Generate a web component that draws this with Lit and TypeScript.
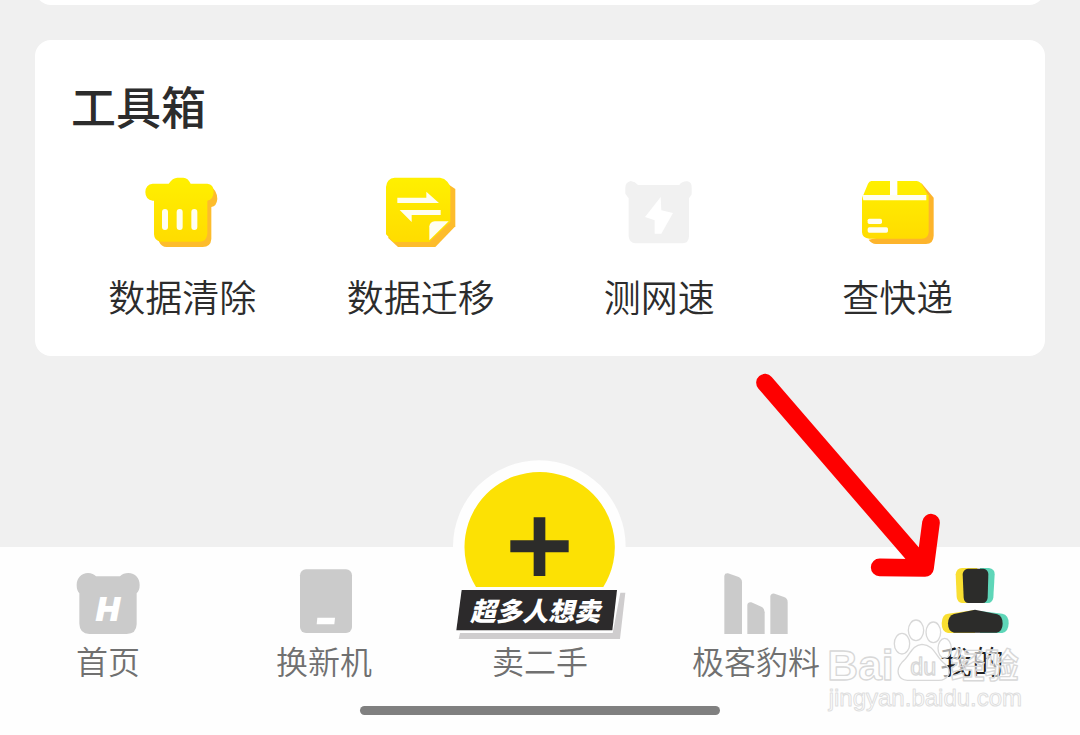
import { LitElement, html, svg, css, type SVGTemplateResult } from "lit";
import { customElement } from "lit/decorators.js";
import { classMap } from "lit/directives/class-map.js";

interface Entry {
  label: string;
  viewBox: string;
  art: SVGTemplateResult;
  raised?: boolean;
  active?: boolean;
}

const tools: Entry[] = [
  {
    label: "数据清除",
    viewBox: "42 9 288 252",
    art: svg`
      <path fill="#fdbc2c" d="M118 62H270Q292 76 292 102Q290 124 274 126V222Q272 246 248 246H140Q124 246 116 228Z"/>
      <path fill="url(#sun)" d="M98 56H146Q158 38 172 38H190Q204 38 212 56H262Q281 57 281 80Q280 104 262 107V206Q260 230 238 230H122Q103 228 102 208V107H98Q76 104 76 81Q77 58 98 56Z"/>
      <g fill="#fffef0"><rect x="126" y="132" width="18" height="63" rx="9"/><rect x="170" y="132" width="18" height="63" rx="9"/><rect x="214" y="132" width="18" height="63" rx="9"/></g>`,
  },
  {
    label: "数据迁移",
    viewBox: "39 9 288 252",
    art: svg`
      <path fill="#fdbc2c" d="M250 48L286 72V184L226 246H114L84 218Z"/>
      <path fill="url(#sun)" d="M104 38H240Q254 40 262 50Q270 58 271 70V170L208 231H100L78 208V66Q80 40 104 38Z"/>
      <path fill="#fffef0" d="M112 98H199V80L237 114H112ZM242 150V135H119L155 171V150Z"/>
      <path fill="#fffef0" d="M266 169L208 226V184Q210 170 224 169Z"/>`,
  },
  {
    label: "测网速",
    viewBox: "33 9 288 252",
    art: svg`
      <path fill="#f1f1f1" d="M92 48Q106 50 114 60H238Q246 48 262 49Q276 52 275 68V88L267 100V214Q266 235 248 235H106Q88 234 86 214V100L76 86V68Q76 52 92 48Z"/>
      <path fill="#fff" d="M182 96L135 156L164 166V206H184L219 144L184 136Z"/>`,
  },
  {
    label: "查快递",
    viewBox: "30 9 288 252",
    art: svg`
      <path fill="#fdb42c" d="M244 54L281 98V212Q280 237 258 237H108Q94 236 86 224L240 190Z"/>
      <path fill="url(#sun)" d="M94 48H150V90H70L84 56Q88 49 94 48ZM172 48H230Q242 50 248 62L264 90H172ZM66 94L266 90V202Q264 221 246 221H88Q67 220 66 202Z"/>
      <path fill="#fffef0" d="M66 90H259V106H70Z"/>
      <g fill="#fffef0"><rect x="83" y="161" width="43" height="16" rx="5"/><rect x="83" y="187" width="61" height="16" rx="5"/></g>`,
  },
];

const tabs: Entry[] = [
  {
    label: "首页",
    viewBox: "0 21 288 240",
    art: svg`
      <path fill="#cbcbcb" d="M84 54Q100 55 108 64H180Q190 54 205 54C226 54 239 70 239 90Q239 106 230 115V208Q229 237 200 237H88Q59 236 58 206V115Q50 106 50 90C50 70 64 54 84 54Z"/>
      <text class="mark" x="109" y="196">H</text>`,
  },
  {
    label: "换新机",
    viewBox: "648 21 288 240",
    art: svg`
      <rect x="720" y="43" width="156" height="191" rx="18" fill="#cbcbcb"/>
      <path fill="#fff" d="M772 188H825L823 208H770Z"/>`,
  },
  {
    label: "卖二手",
    viewBox: "30 18 540 558",
    raised: true,
    art: svg`
      <circle cx="298" cy="290" r="259" fill="#fefefe"/>
      <path fill="#fce104" d="M108 411A225.5 225.5 0 1 1 490 411Z"/>
      <path fill="#2c2c2a" d="M281 202H316V271H386V307H316V378H281V307H211V271H281Z"/>
      <path fill="#cfcdce" d="M60 549H518L541 428H556L540 567H56Z"/>
      <path fill="#2c2a2b" d="M65 420H531L517 541H49Z"/>
      <text class="slogan" x="90" y="513">超多人想卖</text>`,
  },
  {
    label: "极客豹料",
    viewBox: "84 21 288 240",
    art: svg`
      <g fill="#cbcbcb">
        <path d="M133 237V62Q134 54 144 55L176 66Q186 71 186 82V237Z"/>
        <path d="M202 237V150Q203 140 214 142L244 155Q254 160 254 172V237Z"/>
        <path d="M271 237V124Q273 114 284 116L312 126Q323 130 323 141V237Z"/>
      </g>`,
  },
  {
    label: "我的",
    viewBox: "312 21 288 240",
    active: true,
    art: svg`
      <g fill="#f9df32">
        <path d="M426 39H472V144H426Q412 143 410 126L407 58Q409 40 426 39Z"/>
        <path d="M384 176L465 165V234H384Q365 232 365 205Q366 178 384 176Z"/>
      </g>
      <g fill="#5ed6b8">
        <path d="M480 39H507Q524 41 524 58L520 128Q517 143 504 144H480Z"/>
        <path d="M480 168L547 176Q566 179 566 205Q565 232 547 234H480Z"/>
      </g>
      <g fill="#2c2c2a">
        <path d="M444 41H490Q504 43 505 57L503 128Q501 143 488 144H446Q432 143 431 128L428 57Q430 43 444 41Z"/>
        <path d="M465 164L532 178Q548 183 548 206Q547 230 530 233H402Q384 230 384 205Q385 182 402 177Z"/>
      </g>`,
  },
];

@customElement("app-root")
export class AppRoot extends LitElement {
  static styles = css`
    :host {
      display: flex;
      flex-direction: column;
      min-height: 100vh;
      overflow: hidden;
      background: #f0f0f0;
      color: #2c2c2c;
      font-family: "Noto Sans CJK SC", sans-serif;
    }
    *, *::before, *::after { box-sizing: border-box; }
    svg { display: block; }
    main {
      display: flex;
      flex-direction: column;
      gap: 35px;
      padding: 0 35px;
      margin-bottom: 40px;
    }
    .card {
      background: #fff;
      border-radius: 16px;
    }
    .previous {
      height: 32px;
      margin-top: -27px;
    }
    .tools {
      padding: 34px 28px;
    }
    h2 {
      margin: 0 0 30px;
      padding-left: 8px;
      font-size: 45px;
      line-height: 64px;
      font-weight: 500;
    }
    .grid {
      display: grid;
      grid-template-columns: repeat(4, 1fr);
    }
    button {
      display: flex;
      flex-direction: column;
      align-items: center;
      padding: 0;
      border: 0;
      background: none;
      color: inherit;
      font: inherit;
      font-weight: 350;
      white-space: nowrap;
      cursor: pointer;
    }
    .tool {
      gap: 18px;
      font-size: 37px;
      line-height: 52px;
    }
    .icon {
      width: 96px;
      height: 80px;
    }
    .tool .icon { height: 84px; }
    .raised .icon {
      width: 180px;
      height: 186px;
      margin-top: -106px;
    }
    footer {
      position: relative;
      margin-top: auto;
      padding: 15px 0 20px;
      background: #fefefe;
    }
    nav {
      display: grid;
      grid-template-columns: repeat(5, 1fr);
      margin-bottom: 28px;
    }
    .tab {
      color: #707070;
      font-size: 32px;
      line-height: 36px;
    }
    .active { color: #222; }
    .handle {
      width: 33.333%;
      height: 9px;
      margin: 0 auto;
      border-radius: 5px;
      background: #808080;
    }
    .mark {
      fill: #fff;
      stroke: #fff;
      stroke-width: 6px;
      font: italic bold 96px "Liberation Sans", sans-serif;
    }
    .slogan {
      fill: #fff;
      font: italic 900 78px "Noto Sans CJK SC", sans-serif;
    }
    .arrow, .stamp {
      position: absolute;
      pointer-events: none;
    }
    .arrow {
      right: 120px;
      bottom: 145px;
      width: 220px;
      height: 230px;
    }
    .stamp {
      right: 40px;
      bottom: 10px;
      width: 220px;
      height: 170px;
    }
    .outline {
      fill: #fff;
      fill-opacity: 0.6;
      stroke: #d8d8d8;
      stroke-width: 4px;
      stroke-linejoin: round;
    }
    .brand { font: bold 128px "Liberation Sans", sans-serif; }
    .small { font: 70px "Liberation Sans", sans-serif; }
    .han { font: bold 102px "Noto Sans CJK SC", sans-serif; }
    .site {
      stroke: #dedede;
      stroke-width: 3px;
      font: 72px "Liberation Sans", sans-serif;
    }
  `;

  private icon(entry: Entry) {
    return html`<svg class="icon" viewBox=${entry.viewBox} aria-hidden="true">
      <defs>
        <linearGradient id="sun" x1="0" y1="0" x2="0" y2="1">
          <stop offset="0" stop-color="#fff000" />
          <stop offset="1" stop-color="#ffdc00" />
        </linearGradient>
      </defs>
      ${entry.art}
    </svg>`;
  }

  render() {
    return html`
      <main>
        <div class="card previous"></div>
        <section class="card tools" aria-labelledby="toolbox">
          <h2 id="toolbox">工具箱</h2>
          <div class="grid">
            ${tools.map(
              (t) => html`<button class="tool" type="button">${this.icon(t)}<span>${t.label}</span></button>`
            )}
          </div>
        </section>
      </main>
      <footer>
        <nav>
          ${tabs.map(
            (t) => html`<button
              type="button"
              class=${classMap({ tab: true, raised: !!t.raised, active: !!t.active })}
            >${this.icon(t)}<span>${t.label}</span></button>`
          )}
        </nav>
        <div class="handle"></div>
        <svg class="stamp" viewBox="0 0 660 510" aria-hidden="true">
          <g class="outline">
            <text class="brand" x="22" y="375">Bai</text>
            <ellipse cx="246" cy="266" rx="23" ry="31" />
            <ellipse cx="288" cy="226" rx="23" ry="31" />
            <ellipse cx="340" cy="232" rx="22" ry="31" />
            <ellipse cx="374" cy="280" rx="20" ry="30" />
            <path d="M306 268C344 270 346 305 374 326C402 350 382 378 352 376H262C232 374 226 344 246 322C270 304 274 270 306 268Z" />
            <text class="small" x="271" y="361">du</text>
            <text class="han" x="392" y="369">经验</text>
            <text class="site" x="26" y="452">jingyan.baidu.com</text>
          </g>
        </svg>
        <svg class="arrow" viewBox="0 0 660 690" aria-hidden="true">
          <path
            d="M75 68L553 622M573 488L555 624L419 622"
            fill="none" stroke="#fe0000" stroke-width="53"
            stroke-linecap="round" stroke-linejoin="round"
          />
        </svg>
      </footer>
    `;
  }
}
